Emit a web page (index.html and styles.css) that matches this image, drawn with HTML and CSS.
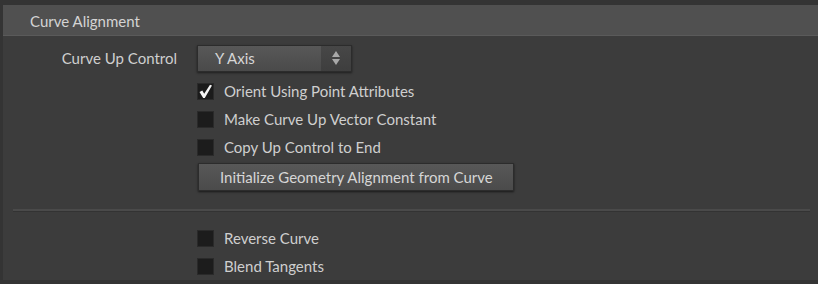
FILE: index.html
```html
<!DOCTYPE html>
<html>
<head>
<meta charset="utf-8">
<link rel="stylesheet" href="styles.css">
</head>
<body>
<div class="panel">
  <div class="header">Curve Alignment</div>
  <div class="body">
    <div class="row">
      <div class="label">Curve Up Control</div>
      <div class="select">
        <span class="select-text">Y Axis</span>
        <span class="select-arrows">
          <svg width="10" height="16" viewBox="0 0 10 16"><path d="M5 1 L9 7 L1 7 Z" fill="#a8a8a8"/><path d="M1 9 L9 9 L5 15 Z" fill="#a8a8a8"/></svg>
        </span>
      </div>
    </div>
    <div class="row check-row first">
      <div class="label"></div>
      <svg class="checked-box" width="17" height="17" viewBox="0 0 17 17"><rect x="0.5" y="0.5" width="16" height="16" fill="#1b1b1b" stroke="#2a2a2a"/><path d="M2.5 9 L5.3 7.6 L7.2 10.8 L13 1.8 L15 2.5 L7.8 15 L6.2 15 Z" fill="#f4f4f4"/></svg>
      <span class="text">Orient Using Point Attributes</span>
    </div>
    <div class="row check-row">
      <div class="label"></div>
      <span class="box"></span>
      <span class="text">Make Curve Up Vector Constant</span>
    </div>
    <div class="row check-row">
      <div class="label"></div>
      <span class="box"></span>
      <span class="text">Copy Up Control to End</span>
    </div>
    <div class="row btn-row">
      <div class="label"></div>
      <div class="button">Initialize Geometry Alignment from Curve</div>
    </div>
    <div class="sep"></div>
    <div class="row check-row">
      <div class="label"></div>
      <span class="box"></span>
      <span class="text">Reverse Curve</span>
    </div>
    <div class="row check-row">
      <div class="label"></div>
      <span class="box"></span>
      <span class="text">Blend Tangents</span>
    </div>
  </div>
</div>
</body>
</html>
```

FILE: styles.css
```css
html, body {
  margin: 0;
  padding: 0;
  background: #343434;
  width: 818px;
  height: 284px;
  overflow: hidden;
}
body {
  font-family: Lato, "Open Sans", sans-serif;
  font-size: 15px;
  color: #cfcfcf;
}
.panel {
  margin: 5px 0 0 3px;
  height: 275px;
  background: #3c3c3c;
  display: flex;
  flex-direction: column;
}
.header {
  height: 31px;
  flex-shrink: 0;
  background: #505050;
  border-bottom: 1px solid #5a5a5a;
  box-sizing: border-box;
  padding-left: 27px;
  display: flex;
  align-items: center;
  color: #d4d4d4;
  padding-top: 1px;
}
.body {
  padding-top: 8px;
  display: flex;
  flex-direction: column;
}
.row {
  display: flex;
  align-items: center;
  height: 28px;
  flex-shrink: 0;
}
.label {
  width: 174px;
  text-align: right;
  flex-shrink: 0;
}
.select {
  margin-left: 20px;
  width: 155px;
  height: 27px;
  box-sizing: border-box;
  display: flex;
  background: linear-gradient(#585858, #4a4a4a);
  border: 1px solid #2c2c2c;
  box-shadow: 0 1px 2px rgba(0,0,0,0.5);
}
.select-text {
  flex: 1;
  padding-left: 17px;
  display: flex;
  align-items: center;
  color: #d6d6d6;
}
.select-arrows {
  width: 30px;
  background: linear-gradient(#474747, #3e3e3e);
  display: flex;
  align-items: center;
  justify-content: center;
}
.check-row.first {
  margin-top: 5px;
}
.box {
  margin-left: 20px;
  width: 17px;
  height: 17px;
  background-color: #1c1c1c;
  border: 1px solid #2a2a2a;
  box-sizing: border-box;
  flex-shrink: 0;
}
.checked-box {
  margin-left: 20px;
  display: block;
  flex-shrink: 0;
}
.check-row .text {
  margin-left: 10px;
}
.btn-row {
  height: 32px;
}
.button {
  margin-left: 21px;
  width: 316px;
  height: 28px;
  box-sizing: border-box;
  background: linear-gradient(#585858, #4b4b4b);
  border: 1px solid #2c2c2c;
  box-shadow: 0 1px 2px rgba(0,0,0,0.6);
  padding-left: 21px;
  display: flex;
  align-items: center;
  color: #d6d6d6;
}
.sep {
  margin: 16px 8px 12px 10px;
  height: 2px;
  flex-shrink: 0;
  background: #4a4a4a;
  border-bottom: 1px solid #333;
}
```
